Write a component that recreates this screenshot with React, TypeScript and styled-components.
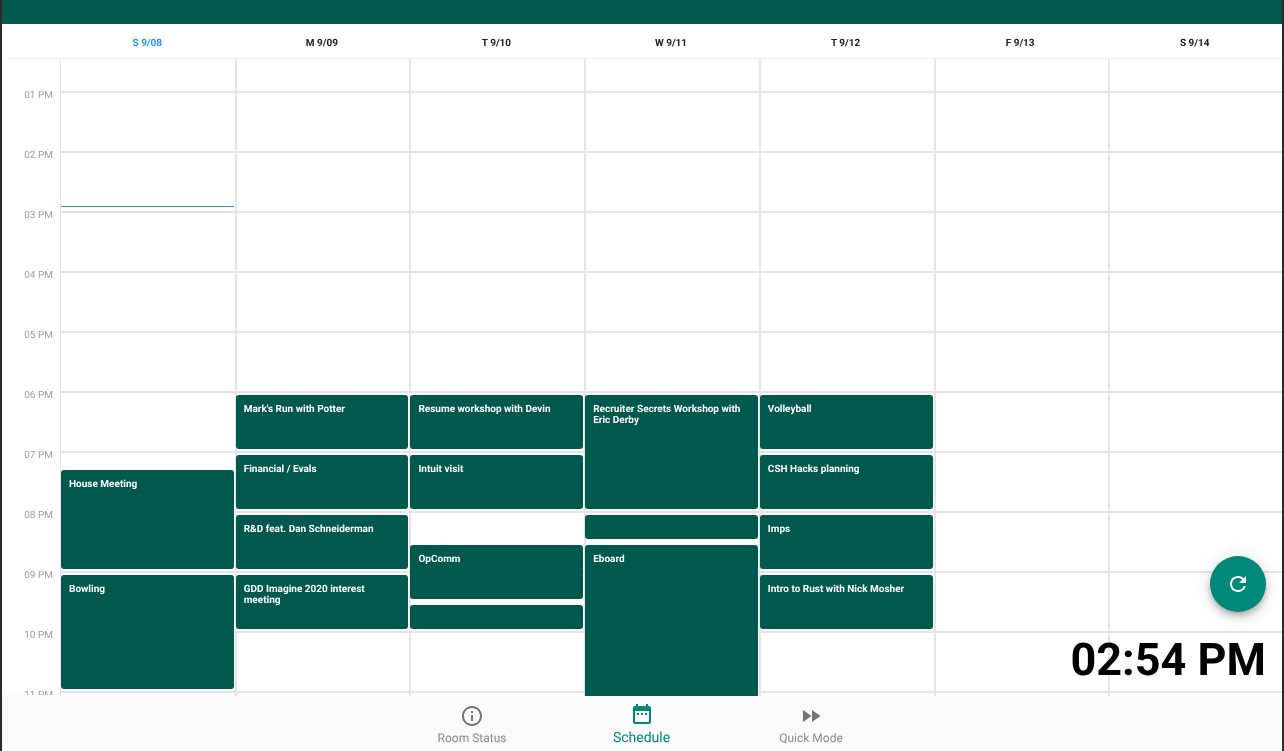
import React from 'react'
import { MdDateRange, MdFastForward, MdInfoOutline, MdRefresh } from 'react-icons/md'
import styled, { createGlobalStyle } from 'styled-components'

const COLORS = {
  GREEN: '#00594c',
  TEAL: '#00897b',
  LINE: '#e5e5e5',
  BLUE: '#2196f3',
  GREY: '#757575'
}

const DAY_TOP = 59

interface CalEvent {
  title?: string
  top: number
  height: number
}

interface Day {
  label: string
  today?: boolean
  events: CalEvent[]
}

const DAYS: Day[] = [
  {
    label: 'S 9/08',
    today: true,
    events: [
      { title: 'House Meeting', top: 470, height: 99 },
      { title: 'Bowling', top: 575, height: 114 }
    ]
  },
  {
    label: 'M 9/09',
    events: [
      { title: "Mark's Run with Potter", top: 395, height: 54 },
      { title: 'Financial / Evals', top: 455, height: 54 },
      { title: 'R&D feat. Dan Schneiderman', top: 515, height: 54 },
      { title: 'GDD Imagine 2020 interest meeting', top: 575, height: 54 }
    ]
  },
  {
    label: 'T 9/10',
    events: [
      { title: 'Resume workshop with Devin', top: 395, height: 54 },
      { title: 'Intuit visit', top: 455, height: 54 },
      { title: 'OpComm', top: 545, height: 54 },
      { top: 605, height: 24 }
    ]
  },
  {
    label: 'W 9/11',
    events: [
      { title: 'Recruiter Secrets Workshop with Eric Derby', top: 395, height: 114 },
      { top: 515, height: 24 },
      { title: 'Eboard', top: 545, height: 174 }
    ]
  },
  {
    label: 'T 9/12',
    events: [
      { title: 'Volleyball', top: 395, height: 54 },
      { title: 'CSH Hacks planning', top: 455, height: 54 },
      { title: 'Imps', top: 515, height: 54 },
      { title: 'Intro to Rust with Nick Mosher', top: 575, height: 54 }
    ]
  },
  { label: 'F 9/13', events: [] },
  { label: 'S 9/14', events: [] }
]

const HOURS = ['01 PM', '02 PM', '03 PM', '04 PM', '05 PM', '06 PM', '07 PM', '08 PM', '09 PM', '10 PM', '11 PM']

const App = () => (
  <>
    <GlobalStyle />
    <Screen>
      <TopBar />
      <DayHeader>
        {DAYS.map((day) => (
          <DayName key={day.label} $today={day.today}>
            {day.label}
          </DayName>
        ))}
      </DayHeader>
      <Calendar>
        <Gutter>
          {HOURS.map((hour) => (
            <HourLabel key={hour}>{hour}</HourLabel>
          ))}
        </Gutter>
        <Days>
          {DAYS.map((day, index) => (
            <DayColumn key={day.label} $first={index === 0}>
              <HourCell $short />
              {HOURS.map((hour) => (
                <HourCell key={hour} />
              ))}
              {day.today && <NowLine />}
              {day.events.map((event) => (
                <EventCard
                  key={event.top}
                  $first={index === 0}
                  $top={event.top - DAY_TOP}
                  $height={event.height}
                >
                  {event.title}
                </EventCard>
              ))}
            </DayColumn>
          ))}
        </Days>
      </Calendar>
      <BottomNav>
        <NavItem>
          <MdInfoOutline size={24} />
          <NavLabel>Room Status</NavLabel>
        </NavItem>
        <NavItem $active>
          <MdDateRange size={24} />
          <NavLabel $active>Schedule</NavLabel>
        </NavItem>
        <NavItem>
          <MdFastForward size={24} />
          <NavLabel>Quick Mode</NavLabel>
        </NavItem>
      </BottomNav>
      <RefreshButton>
        <MdRefresh size={24} />
      </RefreshButton>
      <Clock>02:54 PM</Clock>
    </Screen>
  </>
)

const GlobalStyle = createGlobalStyle`
  html, body {
    margin: 0;
    padding: 0;
    background: #ffffff;
    font-family: Roboto, "Liberation Sans", sans-serif;
    text-rendering: geometricPrecision;
  }
`

const Screen = styled.div`
  position: relative;
  display: flex;
  flex-direction: column;
  box-sizing: border-box;
  width: 1284px;
  height: 751px;
  overflow: hidden;
  background: #ffffff;
  border-left: 2px solid #2b2b2b;
  border-right: 2px solid #2b2b2b;
  will-change: transform;
`

const TopBar = styled.div`
  height: 24px;
  flex-shrink: 0;
  background: ${COLORS.GREEN};
`

const DayHeader = styled.div`
  display: grid;
  grid-template-columns: repeat(7, 1fr);
  align-items: center;
  box-sizing: border-box;
  height: 35px;
  flex-shrink: 0;
  margin-left: 8px;
  padding-top: 4px;
  padding-left: 50px;
  border-bottom: 1px solid #eeeeee;
`

const DayName = styled.div<{ $today?: boolean }>`
  text-align: center;
  font-size: 10px;
  font-weight: 700;
  color: ${({ $today }) => ($today ? COLORS.BLUE : '#212121')};
`

const Calendar = styled.div`
  display: flex;
  height: 637px;
  flex-shrink: 0;
`

const Gutter = styled.div`
  display: flex;
  flex-direction: column;
  flex-shrink: 0;
  box-sizing: border-box;
  width: 58px;
  height: 636px;
  overflow: hidden;
  padding-top: 30px;
`

const HourLabel = styled.div`
  flex-shrink: 0;
  height: 60px;
  padding-top: 2px;
  box-sizing: border-box;
  padding-right: 7px;
  text-align: right;
  font-size: 10px;
  line-height: 10px;
  color: #9e9e9e;
`

const Days = styled.div`
  position: relative;
  z-index: 2;
  display: grid;
  flex: 1;
  grid-template-columns: repeat(7, 1fr);
  margin-right: -1px;
  overflow: hidden;
  background: #ffffff;
`

const DayColumn = styled.div<{ $first?: boolean }>`
  position: relative;
  box-sizing: border-box;
  border-left: ${({ $first }) => ($first ? 1 : 2)}px solid ${COLORS.LINE};
`

const HourCell = styled.div<{ $short?: boolean }>`
  box-sizing: border-box;
  height: ${({ $short }) => ($short ? 34 : 60)}px;
  border-bottom: 2px solid ${COLORS.LINE};
`

const NowLine = styled.div`
  position: absolute;
  top: 147px;
  left: 0;
  right: 1px;
  height: 1px;
  background: ${COLORS.BLUE};
`

const EventCard = styled.div<{ $top: number; $height: number; $first?: boolean }>`
  position: absolute;
  top: ${({ $top }) => $top}px;
  left: ${({ $first }) => ($first ? 0 : -1)}px;
  right: 1px;
  box-sizing: border-box;
  height: ${({ $height }) => $height}px;
  padding: 9px 8px;
  border-radius: 3px;
  background: ${COLORS.GREEN};
  color: #ffffff;
  font-size: 10px;
  font-weight: 700;
  line-height: 11px;
`

const BottomNav = styled.nav`
  position: relative;
  z-index: 1;
  display: flex;
  justify-content: center;
  flex-shrink: 0;
  height: 56px;
  margin-top: -1px;
  padding-right: 1px;
  background: #fafafa;
`

const NavItem = styled.div<{ $active?: boolean }>`
  display: flex;
  flex-direction: column;
  align-items: center;
  width: 169.5px;
  padding-top: ${({ $active }) => ($active ? 7 : 9)}px;
  color: ${({ $active }) => ($active ? COLORS.TEAL : COLORS.GREY)};
`

const NavLabel = styled.span<{ $active?: boolean }>`
  margin-top: ${({ $active }) => ($active ? 4 : 3)}px;
  font-size: ${({ $active }) => ($active ? 14 : 12)}px;
  line-height: ${({ $active }) => ($active ? 16 : 14)}px;
  color: ${({ $active }) => ($active ? COLORS.TEAL : '#8a8a8a')};
`

const RefreshButton = styled.div`
  position: absolute;
  z-index: 3;
  right: 16px;
  bottom: 139px;
  display: flex;
  align-items: center;
  justify-content: center;
  width: 56px;
  height: 56px;
  border-radius: 50%;
  background: ${COLORS.TEAL};
  color: #ffffff;
  box-shadow: 0 3px 5px -1px rgba(0, 0, 0, 0.2), 0 6px 10px 0 rgba(0, 0, 0, 0.14),
    0 1px 18px 0 rgba(0, 0, 0, 0.12);
`

const Clock = styled.div`
  position: absolute;
  z-index: 3;
  right: 16px;
  bottom: 65px;
  font-size: 45px;
  font-weight: 700;
  line-height: 52px;
  color: #000000;
`

export default App
